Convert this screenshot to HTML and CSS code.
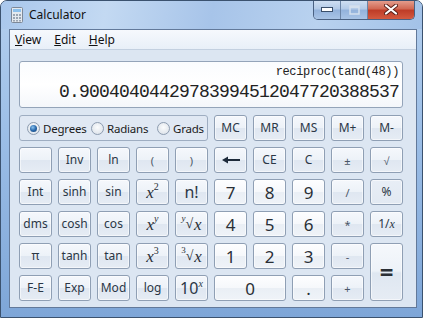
FILE: index.html
```html
<!DOCTYPE html>
<html lang="en">
<head>
    <meta charset="UTF-8">
    <title>Calculator</title>
    <link rel="stylesheet" href="styles.css">
</head>
<body>

<div class="window">
    <div class="titlebar">
        <svg class="app-icon" width="12" height="16" viewBox="0 0 12 16">
            <rect x="0.5" y="0.5" width="11" height="15" rx="1" fill="#e4e9ef" stroke="#7d8898"/>
            <rect x="2" y="2" width="8" height="3" fill="#8cc0ec"/>
            <g fill="#9aa5b3">
                <rect x="2" y="7" width="2" height="2"/><rect x="5" y="7" width="2" height="2"/><rect x="8" y="7" width="2" height="2"/>
                <rect x="2" y="10" width="2" height="2"/><rect x="5" y="10" width="2" height="2"/><rect x="8" y="10" width="2" height="2"/>
                <rect x="2" y="13" width="2" height="1.5"/><rect x="5" y="13" width="2" height="1.5"/><rect x="8" y="13" width="2" height="1.5"/>
            </g>
        </svg>
        <span class="title">Calculator</span>
        <div class="caption">
            <span class="cap cap-min">
                <svg width="12" height="5" viewBox="0 0 12 5"><rect x="0.5" y="0.5" width="11" height="4" fill="#fff" stroke="#3a4f6b"/></svg>
            </span>
            <span class="cap cap-max">
                <svg width="11" height="10" viewBox="0 0 11 10"><rect x="1" y="1" width="9" height="8" fill="none" stroke="#d4e0ee" stroke-width="1.5"/><rect x="1" y="1" width="9" height="2" fill="#d4e0ee"/></svg>
            </span>
            <span class="cap cap-close">
                <svg width="14" height="11" viewBox="0 0 14 11">
                    <path d="M2 1.5 L12 9.5 M12 1.5 L2 9.5" stroke="#5a2019" stroke-width="4" stroke-linecap="round"/>
                    <path d="M2 1.5 L12 9.5 M12 1.5 L2 9.5" stroke="#fff" stroke-width="2.2" stroke-linecap="round"/>
                </svg>
            </span>
        </div>
    </div>

    <div class="client">
        <div class="menubar">
            <span><u>V</u>iew</span>
            <span><u>E</u>dit</span>
            <span><u>H</u>elp</span>
        </div>

        <div class="content">
            <div class="display">
                <div class="expr">reciproc(tand(48))</div>
                <div class="value">0.90040404429783994512047720388537</div>
            </div>

            <div class="keys">
                <div class="angles">
                    <label class="opt deg"><span class="radio checked"></span>Degrees</label>
                    <label class="opt rad"><span class="radio"></span>Radians</label>
                    <label class="opt"><span class="radio"></span>Grads</label>
                </div>
                <button>MC</button>
                <button>MR</button>
                <button>MS</button>
                <button>M+</button>
                <button>M-</button>

                <button></button>
                <button>Inv</button>
                <button>ln</button>
                <button class="op">(</button>
                <button class="op">)</button>
                <button>
                    <svg width="18" height="8" viewBox="0 0 18 8"><path d="M0 4 L6 0.5 L6 7.5 Z" fill="#1d2a3a"/><rect x="5" y="3" width="13" height="2" fill="#1d2a3a"/></svg>
                </button>
                <button>CE</button>
                <button>C</button>
                <button class="op">±</button>
                <button class="op">√</button>

                <button>Int</button>
                <button>sinh</button>
                <button>sin</button>
                <button class="math"><i>x</i><sup>2</sup></button>
                <button class="big">n!</button>
                <button class="num">7</button>
                <button class="num">8</button>
                <button class="num">9</button>
                <button class="op">/</button>
                <button class="flat">%</button>

                <button>dms</button>
                <button>cosh</button>
                <button>cos</button>
                <button class="math"><i>x</i><sup><i>y</i></sup></button>
                <button class="math"><sup class="idx"><i>y</i></sup><span class="rt">√</span><i>x</i></button>
                <button class="num">4</button>
                <button class="num">5</button>
                <button class="num">6</button>
                <button class="op">*</button>
                <button>1/<i class="serif">x</i></button>

                <button>π</button>
                <button>tanh</button>
                <button>tan</button>
                <button class="math"><i>x</i><sup>3</sup></button>
                <button class="math"><sup class="idx">3</sup><span class="rt">√</span><i>x</i></button>
                <button class="num">1</button>
                <button class="num">2</button>
                <button class="num">3</button>
                <button class="op">-</button>
                <button class="equals">=</button>

                <button>F-E</button>
                <button>Exp</button>
                <button>Mod</button>
                <button>log</button>
                <button class="big">10<sup><i class="serif">x</i></sup></button>
                <button class="num zero">0</button>
                <button class="num">.</button>
                <button class="op">+</button>
            </div>
        </div>
    </div>
</div>

</body>
</html>
```

FILE: styles.css
```css
body {
    margin: 0;
    background: #fff;
    font-family: "Noto Sans", "Liberation Sans", sans-serif;
}

.window {
    width: 423px;
    height: 318px;
    box-sizing: border-box;
    border: 1px solid #3b526f;
    border-radius: 7px 7px 0 0;
    background: linear-gradient(180deg, #b4cfee 0%, #9dbfe7 40%, #7ea6d8 100%);
    display: flex;
    flex-direction: column;
    padding-bottom: 9px;
    overflow: hidden;
}

.titlebar {
    height: 28px;
    display: flex;
    align-items: flex-start;
    background: linear-gradient(100deg, #a9c7ec 0%, #c3d9f2 25%, #a7c4e9 50%, #b9d2ef 75%, #a3c2e8 100%);
}
.app-icon {
    margin: 6px 0 0 10px;
}
.title {
    margin: 5px 0 0 6px;
    font-size: 12px;
    color: #111;
}
.caption {
    margin-left: auto;
    margin-right: 7px;
    margin-top: -1px;
    display: flex;
    height: 19px;
    border: 1px solid #4a6182;
    border-top: none;
    border-radius: 0 0 5px 5px;
    overflow: hidden;
}
.cap {
    display: flex;
    align-items: center;
    justify-content: center;
}
.cap-min, .cap-max {
    width: 26px;
    background: linear-gradient(180deg, #d2e1f3 0%, #b4cbe8 45%, #94b3dc 55%, #a9c4e6 100%);
    border-right: 1px solid #6b84a6;
}
.cap-close {
    width: 46px;
    background: linear-gradient(180deg, #e6a394 0%, #d16a55 45%, #bf3d28 55%, #d45a40 100%);
}

.client {
    flex: 1;
    margin: 0 5px 0 8px;
    border: 1px solid #62799a;
    background: #dce6f2;
    display: flex;
    flex-direction: column;
}
.menubar {
    height: 19px;
    border-bottom: 1px solid #c3d0e0;
    background: linear-gradient(180deg, #f6f9fd 0%, #e8eff8 100%);
    display: flex;
    align-items: center;
    font-size: 12px;
    color: #111;
    padding-left: 5px;
    gap: 13px;
}

.content {
    padding: 11px 13px 6px 9px;
}
.display {
    height: 47px;
    box-sizing: border-box;
    margin-bottom: 7px;
    border: 1px solid #94a4b9;
    border-radius: 3px;
    background: linear-gradient(180deg, #fafcfe 0%, #ffffff 50%, #f4f7fb 100%);
    text-align: right;
    padding: 2px 3px 0 0;
    font-family: "Liberation Mono", "DejaVu Sans Mono", monospace;
    color: #222;
}
.expr {
    font-size: 12px;
    letter-spacing: -0.35px;
    line-height: 16px;
}
.value {
    font-size: 18px;
    letter-spacing: -0.8px;
    line-height: 24px;
}

.keys {
    display: grid;
    grid-template-columns: repeat(10, 33px);
    grid-auto-rows: 26px;
    gap: 6px;
}
.angles {
    grid-column: span 5;
    border: 1px solid #9eadc1;
    border-radius: 3px;
    background: #e0e8f3;
    display: flex;
    align-items: center;
    padding-left: 7px;
    font-size: 11.5px;
    letter-spacing: -0.2px;
    color: #1b1b1b;
    overflow: hidden;
}
.opt {
    display: flex;
    align-items: center;
    white-space: nowrap;
}
.opt.deg {
    width: 64px;
}
.opt.rad {
    width: 66px;
}
.radio {
    flex: none;
    width: 11px;
    height: 11px;
    border: 1px solid #8d9cb0;
    border-radius: 50%;
    margin-right: 3px;
    background: radial-gradient(circle at 50% 40%, #fbfcfd 0%, #e2e7ed 70%, #cdd4dd 100%);
    position: relative;
}
.radio.checked::after {
    content: "";
    position: absolute;
    left: 2px;
    top: 2px;
    width: 7px;
    height: 7px;
    border-radius: 50%;
    background: radial-gradient(circle at 40% 35%, #8bc3ef 0%, #2a69ac 50%, #163e6e 100%);
}

button {
    margin: 0;
    padding: 0;
    font-family: "Noto Sans", "Liberation Sans", sans-serif;
    font-size: 12px;
    color: #2b3746;
    border: 1px solid #8f9fb4;
    border-radius: 3px;
    background: linear-gradient(180deg, #f5f8fc 0%, #edf2f8 48%, #dfe7f1 52%, #e6ecf4 100%);
    box-shadow: inset 0 0 0 1px rgba(255, 255, 255, 0.55);
    display: flex;
    align-items: center;
    justify-content: center;
    line-height: 1;
}
button.num {
    font-size: 17px;
    color: #2a2f36;
    background: linear-gradient(180deg, #fdfeff 0%, #f6f8fb 48%, #eaeff5 52%, #eff3f8 100%);
}
button.zero {
    grid-column: span 2;
}
button.op {
    font-size: 11px;
    color: #4a5666;
}
button.flat {
    background: linear-gradient(180deg, #e8eef6 0%, #e2e9f2 100%);
}
button.big {
    font-size: 16px;
}
button.math {
    font-family: "Liberation Serif", serif;
    font-size: 17px;
    color: #2a2f36;
}
button sup {
    font-size: 10px;
    position: relative;
    top: -5px;
    vertical-align: baseline;
}
button .idx {
    font-size: 9px;
    top: -6px;
}
button .rt {
    font-size: 14px;
    margin-right: 1px;
}
button.math i, i.serif {
    font-family: "Liberation Serif", serif;
}
button.equals {
    grid-row: span 2;
    font-size: 24px;
    font-weight: bold;
    color: #2a2f36;
}
```
